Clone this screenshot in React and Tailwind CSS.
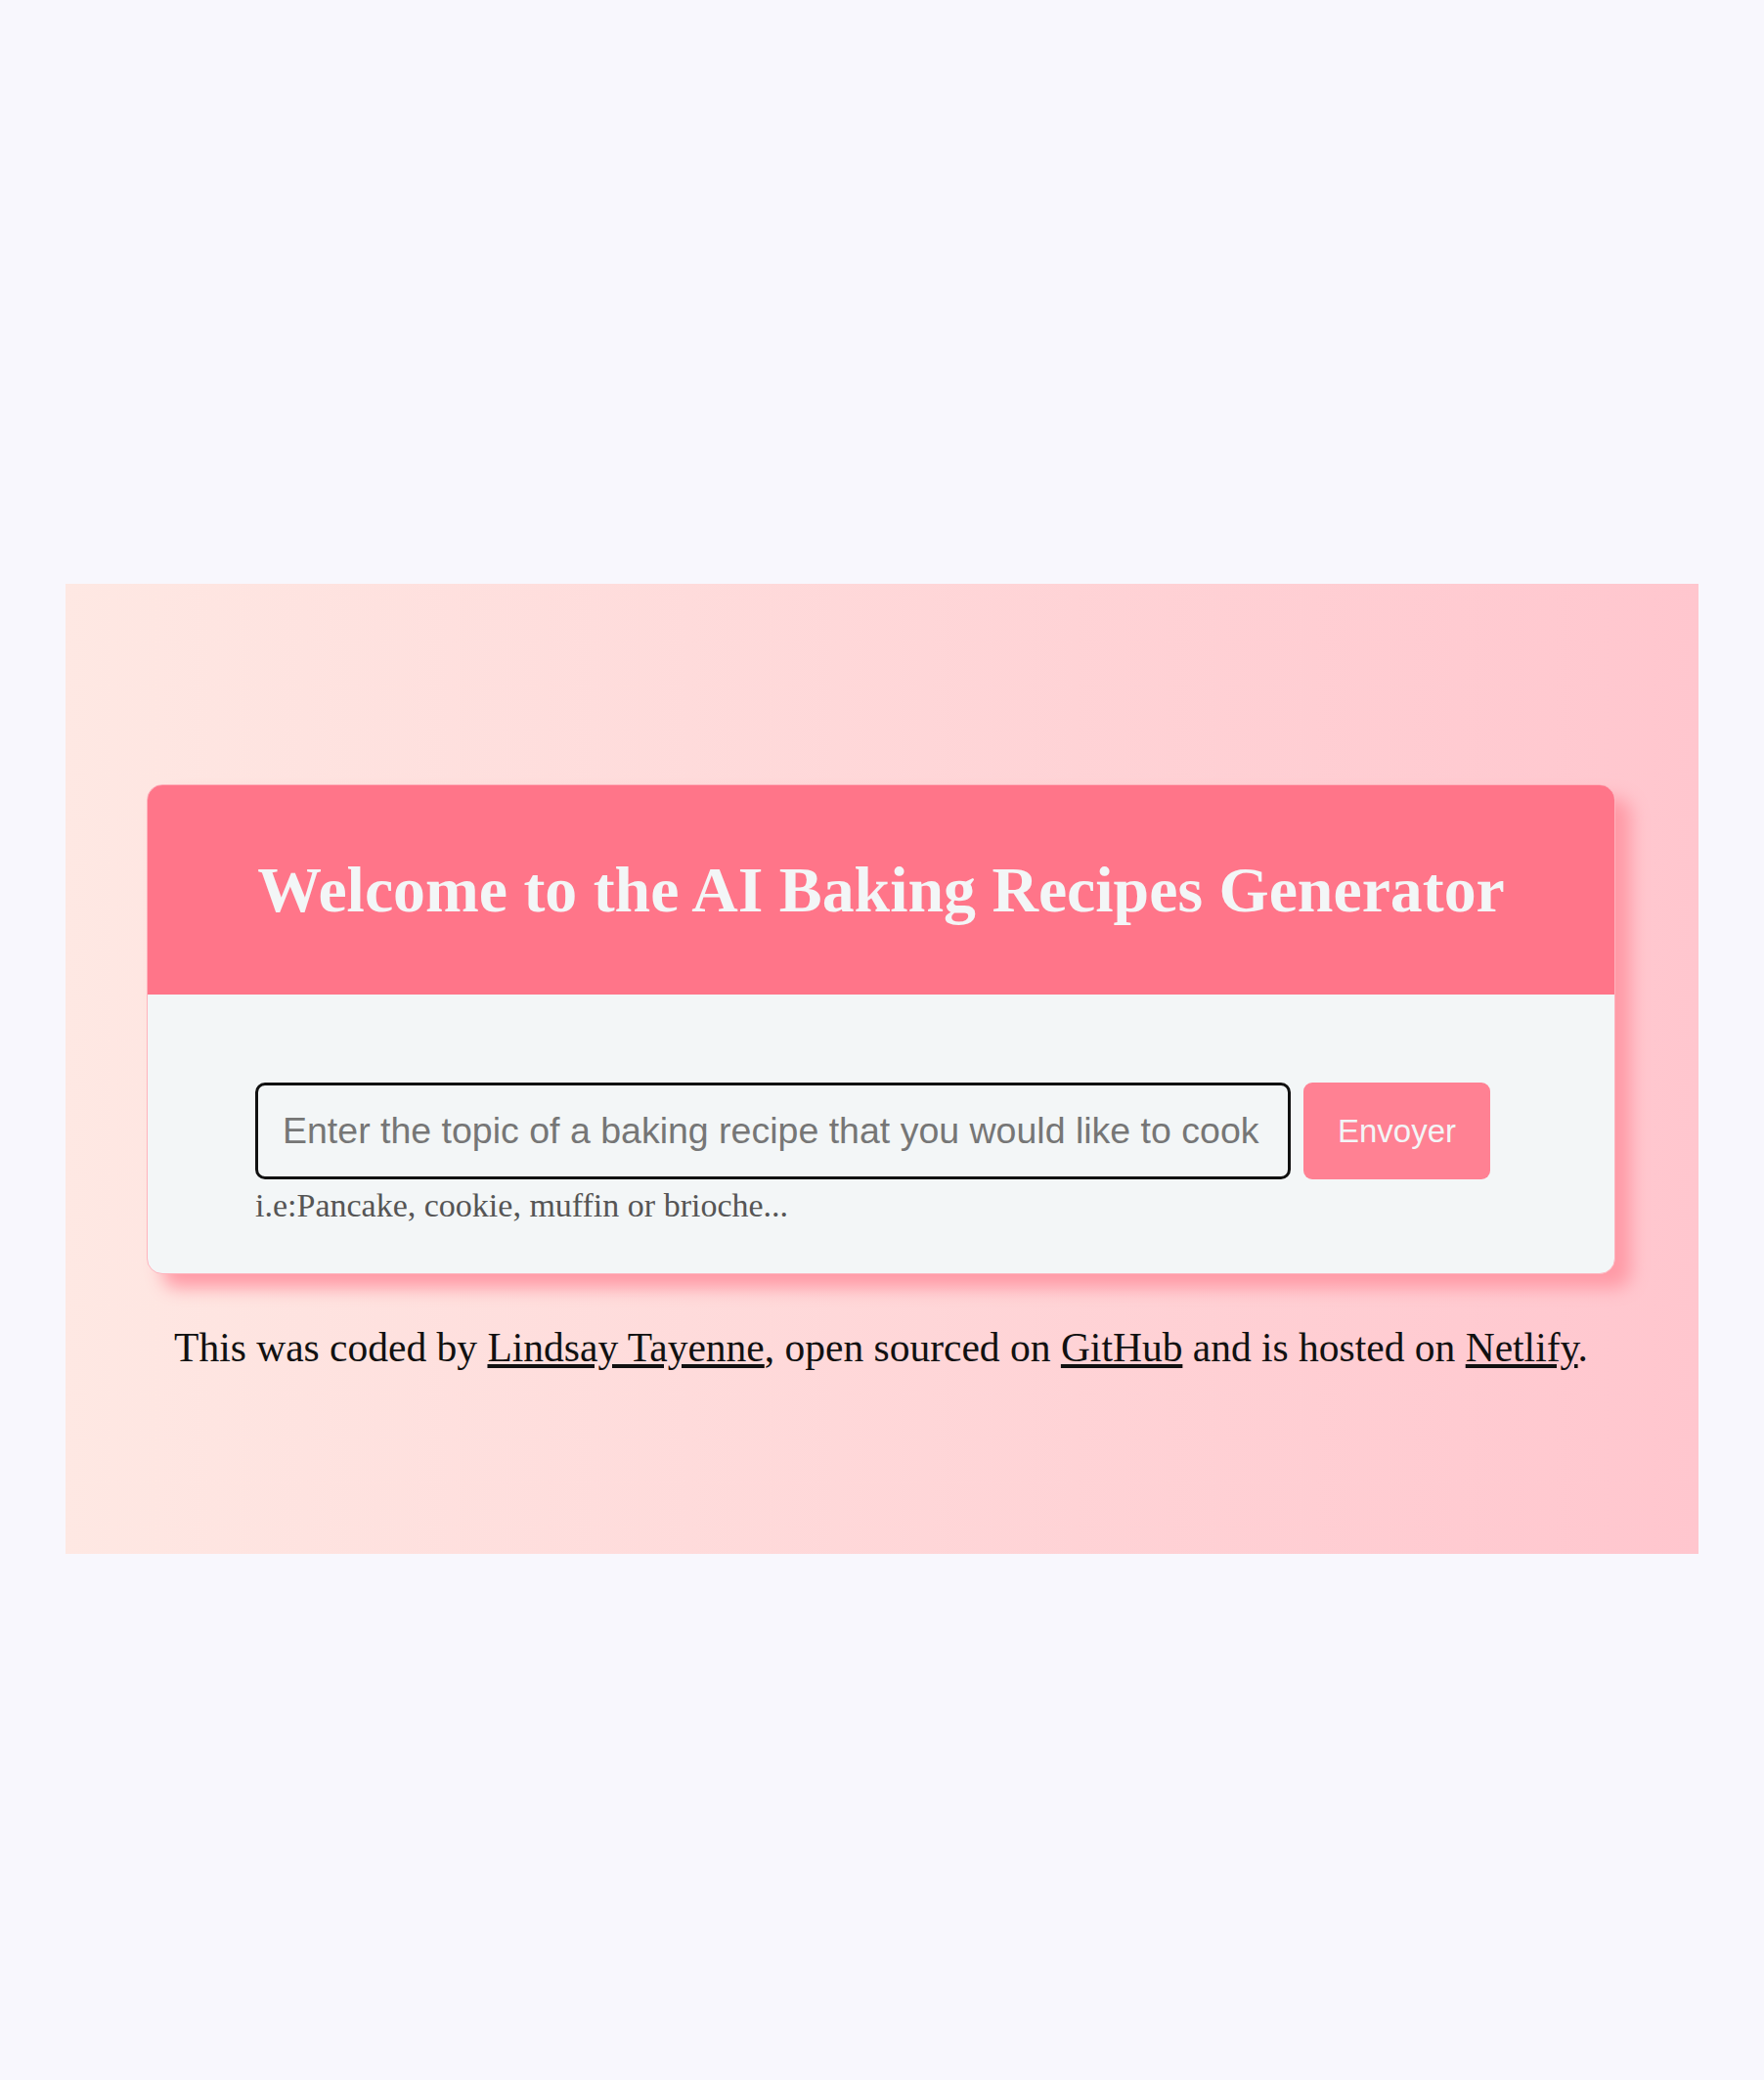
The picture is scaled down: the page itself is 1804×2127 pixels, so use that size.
export default function App() {
  return (
    <div className="min-h-[2127px] w-full bg-[#f8f7fd] pt-[597px]">
      <div className="mx-[67px] h-[992px] bg-[linear-gradient(to_right,#fee8e3,#ffc6ce)] px-[83px] pt-[205px]">
        <div className="w-[1502px] overflow-hidden rounded-[16px] border border-[#ffb3bd] bg-[#f3f6f7] shadow-[16px_14px_18px_#ff9aa6]">
          <div className="flex h-[214px] items-center justify-center bg-[#ff7589]">
            <h1 className="text-[65.8px] font-bold text-[#f3f6f7] [font-family:'Liberation_Serif',serif]">
              Welcome to the AI Baking Recipes Generator
            </h1>
          </div>
          <div className="px-[110px] pt-[90px] pb-[48px]">
            <div className="flex gap-[13px]">
              <input
                className="h-[99px] w-[1059px] rounded-[10px] border-[3px] border-[#111] bg-[#f3f6f7] pl-[25px] pr-[16px] text-[37.5px] text-[#333] outline-none placeholder:text-[#767676] [font-family:'Liberation_Sans',Arial,sans-serif] caret-[#ff7589]"
                placeholder="Enter the topic of a baking recipe that you would like to cook"
              />
              <button className="h-[99px] w-[191px] rounded-[9px] bg-[#ff8193] text-[33px] text-[#f3f6f7] [font-family:'Liberation_Sans',Arial,sans-serif]">
                Envoyer
              </button>
            </div>
            <div className="mt-[6px] text-[34px] leading-[42px] text-[#555] [font-family:'Liberation_Serif',serif]">
              i.e:Pancake, cookie, muffin or brioche...
            </div>
          </div>
        </div>
        <p className="mt-[44px] w-[1502px] text-center text-[41.5px] text-[#111] [font-family:'Liberation_Serif',serif]">
          This was coded by <a className="underline" href="#">Lindsay Tayenne</a>, open sourced on{" "}
          <a className="underline" href="#">GitHub</a> and is hosted on{" "}
          <a className="underline" href="#">Netlify</a>.
        </p>
      </div>
    </div>
  );
}
